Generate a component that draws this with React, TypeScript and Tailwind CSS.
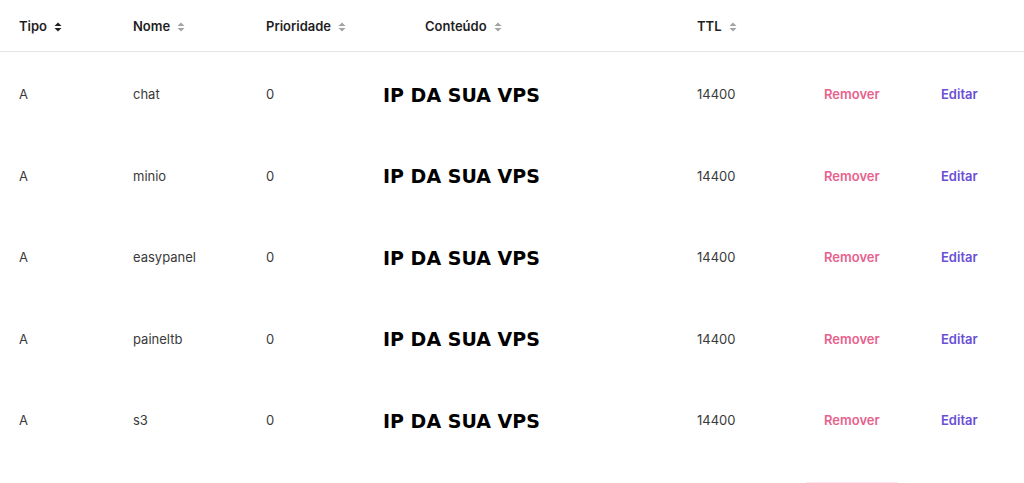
import React from "react";

const rows = ["chat", "minio", "easypanel", "paineltb", "s3"];

const SortIcon = ({ dark }: { dark?: boolean }) => (
    <svg width="8" height="10" viewBox="0 0 8 10" className={dark ? "text-[#1f1f1f]" : "text-[#a3a3a3]"}>
        <path d="M4 0.5 L7.5 4 H0.5 Z" fill="currentColor" />
        <path d="M4 9.5 L7.5 6 H0.5 Z" fill="currentColor" />
    </svg>
);

const cols = "grid grid-cols-[114px_133px_117px_314px_127px_117px_1fr] pl-[19px] items-center";

export default () => {
    return (
        <div className="w-[1024px] h-[483px] overflow-hidden bg-white font-['Inter',sans-serif]">
            <div className={`${cols} h-[52px] pt-[2px] border-b border-[#e5e5e5] text-[13px] font-semibold text-[#1f1f1f]`}>
                <div className="flex items-center gap-[7px]">
                    Tipo <SortIcon dark />
                </div>
                <div className="flex items-center gap-[7px]">
                    Nome <SortIcon />
                </div>
                <div className="flex items-center gap-[7px]">
                    Prioridade <SortIcon />
                </div>
                <div className="flex items-center gap-[7px] pl-[42px]">
                    Conteúdo <SortIcon />
                </div>
                <div className="flex items-center gap-[7px]">
                    TTL <SortIcon />
                </div>
                <div />
                <div />
            </div>
            {rows.map((name) => (
                <div key={name} className={`${cols} h-[81.5px] pt-[4px] text-[13px] text-[#3a3a3a]`}>
                    <div>A</div>
                    <div>{name}</div>
                    <div>0</div>
                    <div className="font-['DejaVu_Sans',sans-serif] font-bold text-[19px] text-black">
                        IP DA SUA VPS
                    </div>
                    <div>14400</div>
                    <div className="font-semibold text-[#e8628e]">Remover</div>
                    <div className="font-semibold text-[#6a4fd6]">Editar</div>
                </div>
            ))}
            <div className="ml-[806px] w-[92px] mt-[22px] h-[2px] bg-[#fde4ee] rounded-full" />
        </div>
    );
};
